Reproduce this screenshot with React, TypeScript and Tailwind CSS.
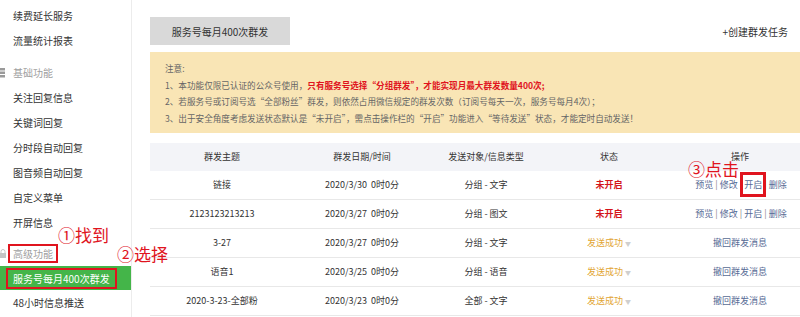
import React from 'react';

const red = 'text-[#e0141e]';

const SideItem: React.FC<{ label: string }> = ({ label }) => (
  <div className="h-[25px] flex items-center pl-[13px] text-[10px] text-[#333]">{label}</div>
);

const rows = [
  { title: '链接', date: '2020/3/30', target: '分组 - 文字', open: false },
  { title: '2123123213213', date: '2020/3/27', target: '分组 - 图文', open: false },
  { title: '3-27', date: '2020/3/27', target: '分组 - 文字', open: true },
  { title: '语音1', date: '2020/3/25', target: '分组 - 语音', open: true },
  { title: '2020-3-23-全部粉', date: '2020/3/23', target: '全部 - 文字', open: true },
];

const cols = 'grid grid-cols-[144px_136px_112px_134px_1fr] items-center text-center';

const App: React.FC = () => {
  return (
    <div className="relative flex w-[800px] h-[317px] overflow-hidden bg-white font-['Noto_Sans_CJK_SC',sans-serif]">
      {/* sidebar */}
      <aside className="w-[132px] shrink-0 border-r border-[#ececec] pt-[3px]">
        <SideItem label="续费延长服务" />
        <SideItem label="流量统计报表" />
        <div className="mt-[7px] h-[25px] flex items-center text-[10px] text-[#a0a0a0]">
          <svg width="6" height="10" viewBox="0 0 6 10" className="mr-[7px]">
            <rect x="0" y="0" width="5" height="2.5" fill="#9a9a9a" />
            <rect x="0" y="3.5" width="5" height="2.5" fill="#9a9a9a" />
            <rect x="0" y="7" width="5" height="2.5" fill="#9a9a9a" />
          </svg>
          基础功能
        </div>
        <SideItem label="关注回复信息" />
        <SideItem label="关键词回复" />
        <SideItem label="分时段自动回复" />
        <SideItem label="图音频自动回复" />
        <SideItem label="自定义菜单" />
        <SideItem label="开屏信息" />
        <div className="mt-[6px] h-[25px] flex items-center text-[10px] text-[#a0a0a0]">
          <svg width="7" height="10" viewBox="0 0 7 10" className="mr-[1px]">
            <path d="M1 4 V2.5 A2 2 0 0 1 5 2.5 V4" stroke="#c4c4c4" strokeWidth="1" fill="none" />
            <rect x="0" y="4" width="6" height="5" fill="#c4c4c4" />
          </svg>
          <span className="border-2 border-[#e0141e] px-[3px] leading-[15px]">高级功能</span>
        </div>
        <div className="h-[24px] bg-[#44b549] flex items-center pl-[6px]">
          <span className="border-2 border-[#e0141e] h-[21px] flex items-center px-[5px] text-[10px] text-white">
            服务号每月400次群发
          </span>
        </div>
        <SideItem label="48小时信息推送" />
      </aside>

      {/* main */}
      <main className="flex-1 pl-[18px] pt-[17px]">
        <div className="flex items-center justify-between">
          <div className="w-[140px] h-[28px] bg-[#d9d9d9] flex items-center justify-center text-[10px] text-[#333]">
            服务号每月400次群发
          </div>
          <div className="mr-[12px] text-[10px] text-[#333]">+创建群发任务</div>
        </div>

        <div className="mt-[7px] bg-[#f9e5b5] pl-[15px] pt-[8px] pb-[6px] text-[8.6px] leading-[16.7px] text-[#666] whitespace-nowrap">
          <div>注意:</div>
          <div>
            1、本功能仅限已认证的公众号使用，
            <span className={`font-bold ${red}`}>只有服务号选择“分组群发”，才能实现月最大群发数量400次;</span>
          </div>
          <div>2、若服务号或订阅号选“全部粉丝”群发，则依然占用微信规定的群发次数（订阅号每天一次，服务号每月4次）；</div>
          <div>3、出于安全角度考虑发送状态默认是“未开启”，需点击操作栏的“开启”功能进入“等待发送”状态，才能定时自动发送！</div>
        </div>

        <div className="mt-[10px] text-[9px] text-[#333]">
          <div className={`${cols} h-[28px] bg-[#f3f4f8]`}>
            <div>群发主题</div>
            <div>群发日期/时间</div>
            <div>发送对象/信息类型</div>
            <div>状态</div>
            <div className="pl-[4px]">操作</div>
          </div>
          {rows.map((r, i) => (
            <div key={i} className={`${cols} h-[29px] border-b border-[#e8e8e8]`}>
              <div>{r.title}</div>
              <div className="whitespace-pre">{r.date}  0时0分</div>
              <div>{r.target}</div>
              {r.open ? (
                <div className="text-[#e2a634]">
                  发送成功 <span className="text-[#cfcfcf] text-[6px] align-middle">▼</span>
                </div>
              ) : (
                <div className="font-bold text-[#d4141b]">未开启</div>
              )}
              {r.open ? (
                <div className="pl-[4px] text-[#576b95]">撤回群发消息</div>
              ) : (
                <div className="pl-[6px] text-[#576b95]">
                  预览 <span className="text-[#888]">|</span> 修改 <span className="text-[#888]">|</span>{' '}
                  <span className="relative">
                    开启
                    {i === 0 && (
                      <span className="absolute -left-[4px] -right-[4px] -top-[6px] -bottom-[6px] border-[3px] border-[#e0141e]" />
                    )}
                  </span>{' '}
                  <span className="text-[#888]">|</span> 删除
                </div>
              )}
            </div>
          ))}
        </div>
      </main>

      {/* annotations */}
      <div className={`absolute left-[58px] top-[226px] text-[17px] leading-[18px] ${red}`}>①找到</div>
      <div className={`absolute left-[117px] top-[245px] text-[17px] leading-[18px] ${red}`}>②选择</div>
      <div className={`absolute left-[688px] top-[161px] text-[17px] leading-[16px] ${red}`}>③点击</div>
    </div>
  );
};

export default App;
